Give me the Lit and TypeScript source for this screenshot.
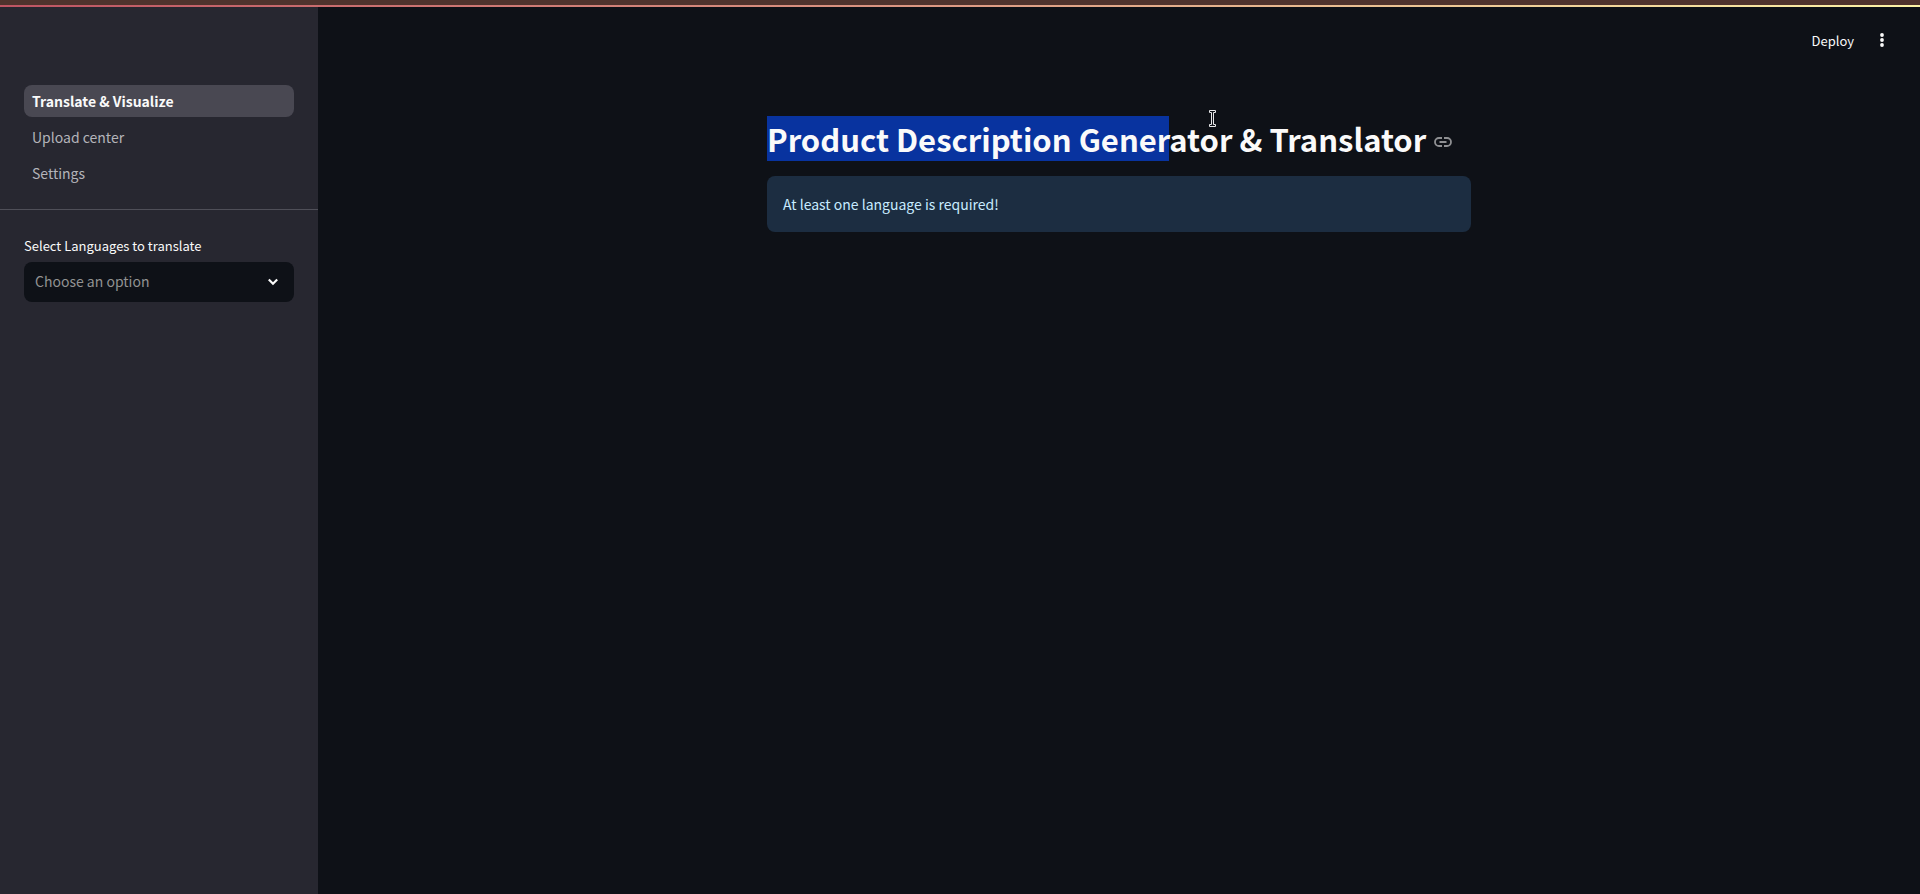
import { LitElement, html, css } from "lit";
import { customElement, property, state } from "lit/decorators.js";
import { classMap } from "lit/directives/class-map.js";

@customElement("side-nav")
class SideNav extends LitElement {
  static styles = css`
    :host {
      display: block;
    }
    .links {
      display: flex;
      flex-direction: column;
      gap: 4px;
      padding: 0 24px;
    }
    .link {
      padding: 0 8px;
      border-radius: 8px;
      color: #b4b4ba;
      font-size: 14px;
      line-height: 32px;
      text-decoration: none;
    }
    .link.active {
      background: #494852;
      color: #fafafa;
      font-weight: 600;
    }
  `;

  @property({ attribute: false }) pages: string[] = [];
  @state() private active = 0;

  render() {
    return html`<nav class="links">
      ${this.pages.map(
        (page, i) => html`<a
          class=${classMap({ link: true, active: i === this.active })}
          href="#"
          @click=${(e: Event) => {
            e.preventDefault();
            this.active = i;
          }}
          >${page}</a
        >`
      )}
    </nav>`;
  }
}

@customElement("language-picker")
class LanguagePicker extends LitElement {
  static styles = css`
    :host {
      display: block;
    }
    .label {
      display: block;
      margin-bottom: 4px;
      color: #fafafa;
      font-size: 13px;
      line-height: 24px;
    }
    .box {
      display: grid;
      align-items: center;
    }
    .box > * {
      grid-area: 1 / 1;
    }
    .field {
      appearance: none;
      width: 100%;
      height: 40px;
      padding: 0 36px 2px 11px;
      border: 0;
      border-radius: 8px;
      background: #0e1117;
      color: #929292;
      font: inherit;
      font-size: 14px;
    }
    .chevron {
      justify-self: end;
      margin-right: 16px;
      pointer-events: none;
    }
  `;

  render() {
    return html`
      <label class="label" for="languages">Select Languages to translate</label>
      <div class="box">
        <select class="field" id="languages">
          <option>Choose an option</option>
        </select>
        <svg class="chevron" width="10" height="8" viewBox="0 0 10 8" aria-hidden="true">
          <path d="M.8 1.5 5 5.7 9.2 1.5" fill="none" stroke="#fafafa" stroke-width="2.2" />
        </svg>
      </div>
    `;
  }
}

@customElement("app-root")
class AppRoot extends LitElement {
  static styles = css`
    :host {
      display: flex;
      flex-direction: column;
      min-height: 100vh;
      background: #0e1117;
      color: #fafafa;
      font-family: "Noto Sans CJK SC", "Noto Sans", sans-serif;
      font-size: 14px;
    }
    .strip {
      height: 5px;
      background: #4f332d;
    }
    .accent {
      height: 2px;
      background: linear-gradient(90deg, #bf5563, #dd9a84 50%, #fdf3a6);
    }
    .layout {
      display: flex;
      flex: 1;
    }
    .sidebar {
      flex: none;
      width: 318px;
      padding-top: 78px;
      box-sizing: border-box;
      background: #272730;
    }
    .divider {
      height: 1px;
      margin: 20px 0 24px;
      border: 0;
      background: #4f4f58;
    }
    .picker {
      padding: 0 24px;
    }
    .main {
      flex: 1;
      display: flex;
      flex-direction: column;
    }
    .toolbar {
      display: flex;
      align-items: center;
      justify-content: flex-end;
      gap: 18px;
      padding: 18px 28px 0;
    }
    .button {
      display: flex;
      align-items: center;
      height: 32px;
      padding: 0 0 2px;
      border: 0;
      background: none;
      color: #fafafa;
      font: inherit;
      font-size: 13px;
    }
    .more {
      width: 20px;
      justify-content: center;
    }
    .content {
      width: 100%;
      max-width: 704px;
      margin: 0 auto;
      padding-top: 56px;
    }
    .heading {
      display: flex;
      align-items: center;
      gap: 8px;
      position: relative;
    }
    .title {
      margin: 0;
      font-size: 31px;
      font-weight: 600;
      line-height: 51px;
      white-space: nowrap;
    }
    .marked {
      background: #08339f;
    }
    .anchor {
      display: flex;
      margin-top: 6px;
    }
    .cursor {
      position: absolute;
      left: 442px;
      top: -3px;
    }
    .alert {
      margin-top: 12px;
      padding: 16px;
      border-radius: 8px;
      background: #1c2d41;
      color: #c7ebff;
      line-height: 24px;
    }
  `;

  render() {
    return html`
      <div class="strip"></div>
      <div class="accent"></div>
      <div class="layout">
        <aside class="sidebar">
          <side-nav .pages=${["Translate & Visualize", "Upload center", "Settings"]}></side-nav>
          <hr class="divider" />
          <language-picker class="picker"></language-picker>
        </aside>
        <main class="main">
          <div class="toolbar">
            <button class="button">Deploy</button>
            <button class="button more" aria-label="More options">
              <svg width="4" height="14" viewBox="0 0 4 14" fill="#fafafa">
                <circle cx="2" cy="2" r="1.9" />
                <circle cx="2" cy="7" r="1.9" />
                <circle cx="2" cy="12" r="1.9" />
              </svg>
            </button>
          </div>
          <div class="content">
            <div class="heading">
              <h1 class="title" id="title"><span class="marked">Product Description Gener</span>ator &amp; Translator</h1>
              <a class="anchor" href="#title" aria-label="Link to heading">
                <svg width="18" height="10" viewBox="0 0 18 10" fill="none" stroke="#8f9093" stroke-width="1.8">
                  <path d="M8 1H5a4 4 0 0 0 0 8h3M10 1h3a4 4 0 0 1 0 8h-3M5.5 5h7" />
                </svg>
              </a>
              <svg class="cursor" width="8" height="18" viewBox="0 0 8 18" aria-hidden="true">
                <path
                  d="M.5 .5h6v2H4.5v12h2v2h-6v-2h2v-12h-2z"
                  fill="#0e1117"
                  stroke="#e8e8ea"
                />
              </svg>
            </div>
            <div class="alert" role="alert">At least one language is required!</div>
          </div>
        </main>
      </div>
    `;
  }
}
